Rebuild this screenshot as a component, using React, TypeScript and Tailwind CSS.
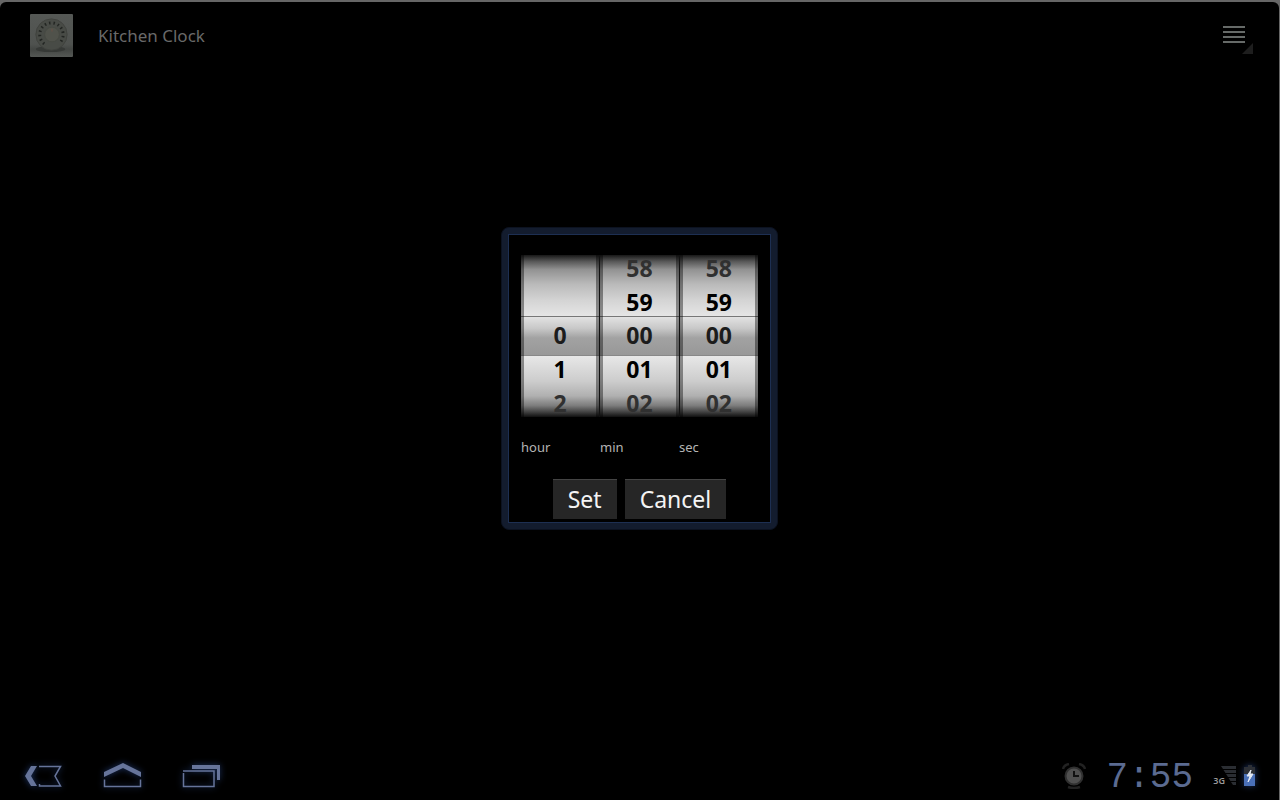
import { useState } from "react";

type Wheel = { id: string; label: string; size: number; pad: number; wrap: boolean };

const wheels: Wheel[] = [
  { id: "hour", label: "hour", size: 24, pad: 1, wrap: false },
  { id: "min", label: "min", size: 60, pad: 2, wrap: true },
  { id: "sec", label: "sec", size: 60, pad: 2, wrap: true },
];

const offsets = [-2, -1, 0, 1, 2];

function NumberWheel({ wheel, value, onChange }: { wheel: Wheel; value: number; onChange: (v: number) => void }) {
  const at = (offset: number): number | null => {
    const n = value + offset;
    if (wheel.wrap) return (n + wheel.size) % wheel.size;
    return n >= 0 && n < wheel.size ? n : null;
  };
  const step = (offset: number) => {
    const n = at(offset);
    if (n !== null) onChange(n);
  };
  return (
    <div
      role="spinbutton"
      tabIndex={0}
      aria-labelledby={`${wheel.id}-label`}
      aria-valuenow={value}
      aria-valuemin={0}
      aria-valuemax={wheel.size - 1}
      onKeyDown={(e) => {
        if (e.key === "ArrowUp") step(-1);
        if (e.key === "ArrowDown") step(1);
      }}
      className="relative flex h-[162px] flex-1 flex-col justify-center bg-[linear-gradient(to_bottom,#181818_0%,#585858_4%,#929292_9%,#bababa_18%,#d4d4d4_28%,#e6e6e6_38%,#e8e8e8_62%,#cccccc_78%,#b0b0b0_87%,#7c7c7c_93%,#404040_97%,#101010_100%)] outline-none"
    >
      <div className="absolute inset-x-0 top-[61px] h-10 border-y border-t-[#777] border-b-[#888] bg-[linear-gradient(to_bottom,#e2e2e2_0%,#c8c8c8_30%,#a2a2a2_55%,#989898_100%)]" />
      <div className="absolute inset-0 shadow-[inset_3px_0_0_rgba(0,0,0,0.4),inset_-3px_0_0_rgba(0,0,0,0.4)]" />
      <div className="relative flex h-[168px] shrink-0 flex-col text-[23px] font-bold text-black">
        {offsets.map((offset) => {
          const n = at(offset);
          return (
            <div
              key={offset}
              onClick={() => step(offset)}
              className={`flex flex-1 cursor-pointer items-center justify-center leading-none ${
                Math.abs(offset) === 2 ? "text-[#303030]" : offset === 0 ? "text-[#1c1c1c]" : "text-black"
              }`}
            >
              {n === null ? "" : String(n).padStart(wheel.pad, "0")}
            </div>
          );
        })}
      </div>
    </div>
  );
}

function KitchenTimerIcon() {
  return (
    <svg viewBox="0 0 44 44" className="size-[43px]" aria-hidden="true">
      <defs>
        <linearGradient id="photo" x1="0" y1="0" x2="0" y2="1">
          <stop offset="0" stopColor="#555855" />
          <stop offset="0.7" stopColor="#4f524f" />
          <stop offset="0.82" stopColor="#434643" />
          <stop offset="1" stopColor="#555855" />
        </linearGradient>
      </defs>
      <rect width="44" height="44" rx="1" fill="url(#photo)" />
      <ellipse cx="21" cy="36" rx="15" ry="3" fill="#363936" />
      <circle cx="22" cy="21" r="16" fill="#484b46" stroke="#3f423d" />
      <path d="M14.500 30.500A12 12 0 1 1 30.500 29.500" fill="none" stroke="#222522" strokeWidth="3" strokeDasharray="1.5 3" />
      <circle cx="22.500" cy="21" r="7.500" fill="#50524b" stroke="#464942" />
      <path d="M22.500 15v3" stroke="#6b5047" />
    </svg>
  );
}

function AlarmIcon() {
  return (
    <svg viewBox="0 0 24 26" className="h-[26px] w-6" aria-hidden="true">
      <g fill="none" stroke="#222" strokeWidth="2.5">
        <path d="M1 6q1-4 6-5M23 6q-1-4-6-5M6 24q6 2 12 0" />
      </g>
      <circle cx="12" cy="13" r="8.5" fill="#505050" stroke="#303030" strokeWidth="2" />
      <path d="M12 8v5h5" fill="none" stroke="#111" strokeWidth="2" />
    </svg>
  );
}

const navGlow = "drop-shadow-[0_0_3px_#1e3566]";

export default function App() {
  const [values, setValues] = useState([0, 0, 0]);
  return (
    <div className="bg-[#666]">
      <div className="relative flex min-h-screen flex-col border-t-2 border-r border-[#666] font-['Noto_Sans','Open_Sans',sans-serif]">
        <div className="flex flex-1 flex-col rounded-t-md bg-black">
          <header className="flex h-[67px] items-center pr-[26px] pl-[30px]">
            <KitchenTimerIcon />
            <h1 className="ml-[25px] text-[17px] text-[#696969]">Kitchen Clock</h1>
            <button type="button" aria-label="Menu" className="mt-2 ml-auto">
              <svg viewBox="0 0 30 29" className="h-[29px] w-[30px]" aria-hidden="true">
                <path d="M0 2h22M0 7h22M0 12h22M0 17h22" stroke="#666a68" strokeWidth="2" />
                <path d="M30 18v11H19z" fill="#1e1e1e" />
              </svg>
            </button>
          </header>

          <main className="flex-1" />

          <footer className="flex h-12 items-center justify-between pr-[23px] pl-6">
            <nav className="flex items-center gap-10" aria-label="System">
              <button type="button" aria-label="Back" className={navGlow}>
                <svg viewBox="0 0 38 24" className="h-6 w-[38px]" aria-hidden="true">
                  <path d="M7 2h6L7 12l6 10H7L1 12z" fill="#66749a" />
                  <path d="M15 2.500H36.500L31 12l5.500 10H15.500v-2" fill="none" stroke="#66749a" strokeWidth="1.500" />
                </svg>
              </button>
              <button type="button" aria-label="Home" className={navGlow}>
                <svg viewBox="0 0 40 26" className="h-[26px] w-10" aria-hidden="true">
                  <path d="M2 9 21 0l18 9v5L21 5 2 14z" fill="#66749a" />
                  <path d="M2.500 16.500v7h36v-7" fill="none" stroke="#66749a" strokeWidth="1.500" />
                </svg>
              </button>
              <button type="button" aria-label="Recent apps" className={navGlow}>
                <svg viewBox="0 0 38 24" className="h-6 w-[38px]" aria-hidden="true">
                  <path d="M10 1h28v15h-3V5H10z" fill="#66749a" />
                  <path d="M1 7h31v15.500H1.500V9" fill="none" stroke="#66749a" strokeWidth="1.500" />
                </svg>
              </button>
            </nav>

            <div className="flex items-center">
              <AlarmIcon />
              <time className="w-[127px] pt-1 text-center font-['Liberation_Mono',monospace] text-[36px] leading-none text-[#5b6b91]">
                7:55
              </time>
              <span className="mt-2 text-[9px] leading-none font-semibold text-[#999]">3G</span>
              <svg viewBox="0 0 15 20" className="-ml-1 h-5 w-[15px]" aria-hidden="true">
                <path d="M0 0h15v3H2zM2.500 4H15v3H4.500zM5 8h10v3H7zM7.500 12H15v3H9.500zM10 16h5v3h-3z" fill="#2a2d32" />
              </svg>
              <svg viewBox="0 0 12 22" className="ml-2 h-[22px] w-3 drop-shadow-[0_0_3px_#1e3566]" aria-hidden="true">
                <path d="M4 0h4v2h3v7H0V2h4z" fill="#2d3036" />
                <path d="M0 9h11v12H0z" fill="#4a70b8" />
                <path d="M7 5 3 11h3l-2 6 5-8H6z" fill="#e4e9f4" stroke="#e4e9f4" />
              </svg>
            </div>
          </footer>
        </div>

        <div className="absolute inset-x-0 top-[3px] bottom-12 flex items-center justify-center">
          <div role="dialog" aria-label="Set timer" className="rounded-lg border border-[#0c1220] bg-[#131c2e] p-1.5">
            <form
              onSubmit={(e) => e.preventDefault()}
              className="flex w-[263px] flex-col border border-[#1d2f52] bg-black px-3 pt-5 pb-[3px]"
            >
              <div className="flex gap-px bg-[#111]">
                {wheels.map((wheel, i) => (
                  <NumberWheel
                    key={wheel.id}
                    wheel={wheel}
                    value={values[i]}
                    onChange={(v) => setValues(values.map((old, j) => (j === i ? v : old)))}
                  />
                ))}
              </div>
              <div className="mt-5 flex text-[13px] leading-5 text-[#b4b4b4]">
                {wheels.map((wheel) => (
                  <span key={wheel.id} id={`${wheel.id}-label`} className="flex-1">
                    {wheel.label}
                  </span>
                ))}
              </div>
              <div className="mt-[22px] flex justify-center gap-2 text-[23px] leading-[39px] text-[#f4f4f4]">
                <button type="submit" className="border-t border-[#444] bg-[#262626] px-[15px]">
                  Set
                </button>
                <button
                  type="button"
                  onClick={() => setValues([0, 0, 0])}
                  className="border-t border-[#444] bg-[#262626] px-[15px]"
                >
                  Cancel
                </button>
              </div>
            </form>
          </div>
        </div>
      </div>
    </div>
  );
}
